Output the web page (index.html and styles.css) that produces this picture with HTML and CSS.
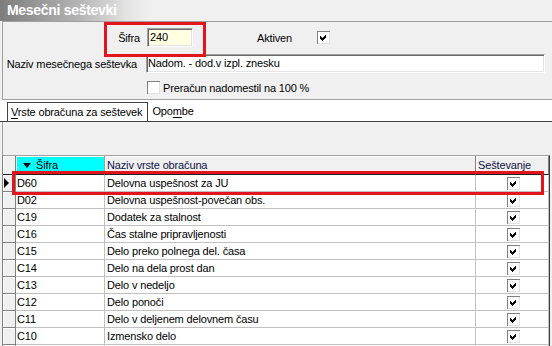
FILE: index.html
```html
<!DOCTYPE html>
<html lang="sl">
    <head>
        <meta charset="UTF-8">
        <title>Mesečni seštevki</title>
        <link rel="stylesheet" href="styles.css">
    </head>
    <body>
        <div class="window">
            <div class="title">Mesečni seštevki</div>

            <div class="panel">
                <div class="row row-sifra">
                    <span class="lbl lbl-sifra">Šifra</span>
                    <div class="edit edit-sifra">240</div>
                    <span class="lbl-aktiven">Aktiven</span>
                    <span class="check"><svg width="13" height="13" viewBox="0 0 13 13"><polygon points="3,5 5,7 9,3 9,6 5,10 3,8" fill="#000" shape-rendering="crispEdges"/></svg></span>
                </div>
                <div class="row row-naziv">
                    <span class="lbl lbl-naziv">Naziv mesečnega seštevka</span>
                    <div class="edit edit-naziv">Nadom. - dod.v izpl. znesku</div>
                </div>
                <div class="row row-prer">
                    <span class="check"></span>
                    <span class="lbl-prer">Preračun nadomestil na 100 %</span>
                </div>
            </div>

            <div class="tabs">
                <div class="tab active"><u>V</u>rste obračuna za seštevek</div>
                <div class="tab">Opo<u>m</u>be</div>
            </div>

            <div class="toolbar"></div>

            <div class="grid">
                <div class="grow ghead">
                    <div class="cell ind"></div>
                    <div class="cell sorted"><span class="sort"></span>Šifra</div>
                    <div class="cell hd">Naziv vrste obračuna</div>
                    <div class="cell hd">Seštevanje</div>
                </div>
                <div class="grow">
                    <div class="cell ind"><span class="cur"></span></div>
                    <div class="cell">D60</div>
                    <div class="cell name">Delovna uspešnost za JU</div>
                    <div class="cell chk"><span class="check"><svg width="13" height="13" viewBox="0 0 13 13"><polygon points="3,5 5,7 9,3 9,6 5,10 3,8" fill="#000" shape-rendering="crispEdges"/></svg></span></div>
                </div>
                <div class="grow">
                    <div class="cell ind"></div>
                    <div class="cell">D02</div>
                    <div class="cell name">Delovna uspešnost-povečan obs.</div>
                    <div class="cell chk"><span class="check"><svg width="13" height="13" viewBox="0 0 13 13"><polygon points="3,5 5,7 9,3 9,6 5,10 3,8" fill="#000" shape-rendering="crispEdges"/></svg></span></div>
                </div>
                <div class="grow">
                    <div class="cell ind"></div>
                    <div class="cell">C19</div>
                    <div class="cell name">Dodatek za stalnost</div>
                    <div class="cell chk"><span class="check"><svg width="13" height="13" viewBox="0 0 13 13"><polygon points="3,5 5,7 9,3 9,6 5,10 3,8" fill="#000" shape-rendering="crispEdges"/></svg></span></div>
                </div>
                <div class="grow">
                    <div class="cell ind"></div>
                    <div class="cell">C16</div>
                    <div class="cell name">Čas stalne pripravljenosti</div>
                    <div class="cell chk"><span class="check"><svg width="13" height="13" viewBox="0 0 13 13"><polygon points="3,5 5,7 9,3 9,6 5,10 3,8" fill="#000" shape-rendering="crispEdges"/></svg></span></div>
                </div>
                <div class="grow">
                    <div class="cell ind"></div>
                    <div class="cell">C15</div>
                    <div class="cell name">Delo preko polnega del. časa</div>
                    <div class="cell chk"><span class="check"><svg width="13" height="13" viewBox="0 0 13 13"><polygon points="3,5 5,7 9,3 9,6 5,10 3,8" fill="#000" shape-rendering="crispEdges"/></svg></span></div>
                </div>
                <div class="grow">
                    <div class="cell ind"></div>
                    <div class="cell">C14</div>
                    <div class="cell name">Delo na dela prost dan</div>
                    <div class="cell chk"><span class="check"><svg width="13" height="13" viewBox="0 0 13 13"><polygon points="3,5 5,7 9,3 9,6 5,10 3,8" fill="#000" shape-rendering="crispEdges"/></svg></span></div>
                </div>
                <div class="grow">
                    <div class="cell ind"></div>
                    <div class="cell">C13</div>
                    <div class="cell name">Delo v nedeljo</div>
                    <div class="cell chk"><span class="check"><svg width="13" height="13" viewBox="0 0 13 13"><polygon points="3,5 5,7 9,3 9,6 5,10 3,8" fill="#000" shape-rendering="crispEdges"/></svg></span></div>
                </div>
                <div class="grow">
                    <div class="cell ind"></div>
                    <div class="cell">C12</div>
                    <div class="cell name">Delo ponoči</div>
                    <div class="cell chk"><span class="check"><svg width="13" height="13" viewBox="0 0 13 13"><polygon points="3,5 5,7 9,3 9,6 5,10 3,8" fill="#000" shape-rendering="crispEdges"/></svg></span></div>
                </div>
                <div class="grow">
                    <div class="cell ind"></div>
                    <div class="cell">C11</div>
                    <div class="cell name">Delo v deljenem delovnem času</div>
                    <div class="cell chk"><span class="check"><svg width="13" height="13" viewBox="0 0 13 13"><polygon points="3,5 5,7 9,3 9,6 5,10 3,8" fill="#000" shape-rendering="crispEdges"/></svg></span></div>
                </div>
                <div class="grow">
                    <div class="cell ind"></div>
                    <div class="cell">C10</div>
                    <div class="cell name">Izmensko delo</div>
                    <div class="cell chk"><span class="check"><svg width="13" height="13" viewBox="0 0 13 13"><polygon points="3,5 5,7 9,3 9,6 5,10 3,8" fill="#000" shape-rendering="crispEdges"/></svg></span></div>
                </div>
                <div class="grow">
                    <div class="cell ind"></div>
                    <div class="cell"></div>
                    <div class="cell name"></div>
                    <div class="cell chk"></div>
                </div>
            </div>

            <div class="mark mark-sifra"></div>
            <div class="mark mark-row"></div>
        </div>
    </body>
</html>
```

FILE: styles.css
```css
html, body {
    margin: 0;
    height: 100%;
    overflow: hidden;
}
body {
    font-family: 'Liberation Sans', Arial, sans-serif;
    font-size: 11px;
    letter-spacing: -0.15px;
    color: #000;
    background-color: #f0f0f0;
}
.window {
    position: relative;
    width: 552px;
    height: 346px;
}
.title {
    height: 21px;
    line-height: 21px;
    padding-left: 7px;
    font-size: 14px;
    font-weight: bold;
    letter-spacing: -0.3px;
    color: #fff;
    background: linear-gradient(90deg, #7d7d7d 0, #b5b5b5 80px, #e2e2e2 125px, #f0f0f0 150px);
}
.panel {
    height: 77px;
    margin-left: 2px;
    border-top: 1px solid #a0a0a0;
    border-left: 1px solid #a0a0a0;
    border-bottom: 1px solid #a0a0a0;
}
.row {
    display: flex;
    align-items: center;
}
.row-sifra {
    margin-top: 6px;
    height: 19px;
}
.row-naziv {
    margin-top: 7px;
    height: 19px;
}
.row-prer {
    margin-top: 8px;
    height: 13px;
    padding-left: 144px;
}
.lbl {
    text-align: right;
    flex: none;
}
.lbl-sifra {
    width: 137px;
}
.lbl-naziv {
    width: 134px;
}
.edit {
    box-sizing: border-box;
    height: 19px;
    line-height: 17px;
    border: 1px solid;
    border-color: #a0a0a0 #fff #fff #a0a0a0;
    box-shadow: inset 1px 1px 0 #696969, inset -1px -1px 0 #e3e3e3;
    white-space: nowrap;
    overflow: hidden;
}
.edit-sifra {
    margin-left: 7px;
    width: 46px;
    padding-left: 2px;
    background-color: #ffffe1;
}
.edit-naziv {
    margin-left: 9px;
    width: 399px;
    padding-left: 1px;
    background-color: #fff;
}
.lbl-aktiven {
    margin-left: 64px;
    width: 60px;
}
.lbl-prer {
    margin-left: 3px;
}
.check {
    box-sizing: border-box;
    display: inline-block;
    width: 13px;
    height: 13px;
    background-color: #fff;
    box-shadow: inset 1px 1px 0 #808080, inset -1px -1px 0 #e3e3e3;
    flex: none;
}
.check svg {
    display: block;
}
.tabs {
    display: flex;
    align-items: flex-end;
    height: 21px;
    background-color: #fff;
    border-bottom: 1px solid #404040;
}
.tab {
    height: 19px;
    line-height: 18px;
    padding: 0 5px 0 4px;
}
.tab.active {
    margin-left: 7px;
    padding-left: 3px;
    border: 1px solid #404040;
    border-bottom: none;
    height: 18px;
}
.tab u {
    text-decoration-thickness: 1px;
    text-underline-offset: 2px;
}
.toolbar {
    height: 33px;
    margin-left: 2px;
    border-left: 1px solid #a0a0a0;
}
.grid {
    margin-left: 2px;
    width: 548px;
    box-sizing: border-box;
    border-top: 1px solid #a0a0a0;
    border-left: 1px solid #808080;
    border-right: 1px solid #404040;
    background-color: #fff;
}
.grow {
    display: grid;
    grid-template-columns: 13px 89px 371px 73px;
    height: 17px;
}
.cell {
    box-sizing: border-box;
    border-right: 1px solid #c0c0c0;
    border-bottom: 1px solid #c0c0c0;
    padding-left: 1px;
    line-height: 16px;
    white-space: nowrap;
    overflow: hidden;
}
.cell.name {
    padding-left: 2px;
}
.cell.chk {
    display: flex;
    align-items: center;
    justify-content: center;
    padding-left: 2px;
}
.cell.ind {
    position: relative;
    background-color: #f0f0f0;
    border-right-color: #808080;
    border-bottom-color: #808080;
    box-shadow: inset 1px 1px 0 #fff;
}
.ghead {
    height: 19px;
}
.ghead .cell {
    line-height: 18px;
    background-color: #f0f0f0;
    border-right-color: #808080;
    border-bottom-color: #202020;
    box-shadow: inset 1px 1px 0 #fff;
}
.ghead .cell.sorted {
    display: flex;
    align-items: center;
    padding-left: 7px;
    background-color: #00ffff;
    border-right-color: #a0a0a0;
}
.ghead .cell.hd {
    padding-left: 2px;
    color: #101048;
}
.sort {
    width: 0;
    height: 0;
    margin-right: 5px;
    border-top: 5px solid #000;
    border-left: 4px solid transparent;
    border-right: 4px solid transparent;
}
.cur {
    position: absolute;
    left: 1px;
    top: 3px;
    width: 0;
    height: 0;
    border-left: 5px solid #000;
    border-top: 5px solid transparent;
    border-bottom: 5px solid transparent;
}
.mark {
    position: absolute;
    border: 3px solid #e3141c;
    box-sizing: border-box;
}
.mark-sifra {
    left: 104px;
    top: 22px;
    width: 102px;
    height: 35px;
}
.mark-row {
    left: 12px;
    top: 171px;
    width: 532px;
    height: 24px;
}
```
